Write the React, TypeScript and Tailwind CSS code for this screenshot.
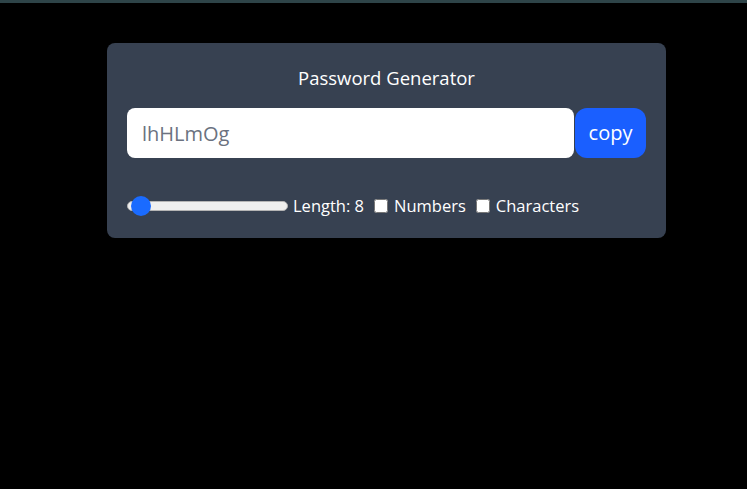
import { useState } from "react";

export default function App() {
  const [length, setLength] = useState(8);
  const [numbers, setNumbers] = useState(false);
  const [chars, setChars] = useState(false);
  const password = "lhHLmOg";

  return (
    <div className="min-h-[489px] bg-black border-t-[3px] border-[#2e4448] font-['Open_Sans',sans-serif]">
      <div className="ml-[107px] mt-10 w-[559px] rounded-lg bg-[#374151] px-5 pt-[21px] pb-5 text-white">
        <h1 className="mb-4 text-center text-[18.5px] leading-7 text-white">Password Generator</h1>
        <div className="flex gap-px">
          <input
            type="text"
            value={password}
            readOnly
            placeholder="Password"
            className="h-[50px] w-full rounded-lg bg-white px-[15px] text-xl text-[#6b7280] outline-none"
          />
          <button className="h-[50px] w-[71px] shrink-0 rounded-xl bg-[#1a5fff] text-xl text-white">copy</button>
        </div>
        <div className="mt-9 flex h-6 items-center text-[16.5px] leading-6">
          <div className="flex items-center gap-x-[5px]">
            <input
              type="range"
              min={6}
              max={100}
              value={length}
              onChange={(e) => setLength(Number(e.target.value))}
              className="h-[10px] w-[161px] cursor-pointer appearance-none rounded-full border border-[#b5b5b5] bg-[#efefef] [&::-webkit-slider-thumb]:h-5 [&::-webkit-slider-thumb]:w-5 [&::-webkit-slider-thumb]:appearance-none [&::-webkit-slider-thumb]:rounded-full [&::-webkit-slider-thumb]:bg-[#1a6bff]"
            />
            <label>Length: {length}</label>
          </div>
          <div className="ml-[10px] flex items-center gap-x-[6px]">
            <input type="checkbox" className="h-[14px] w-[14px]" checked={numbers} onChange={() => setNumbers((p) => !p)} />
            <label>Numbers</label>
          </div>
          <div className="ml-[10px] flex items-center gap-x-[6px]">
            <input type="checkbox" className="h-[14px] w-[14px]" checked={chars} onChange={() => setChars((p) => !p)} />
            <label>Characters</label>
          </div>
        </div>
      </div>
    </div>
  );
}
